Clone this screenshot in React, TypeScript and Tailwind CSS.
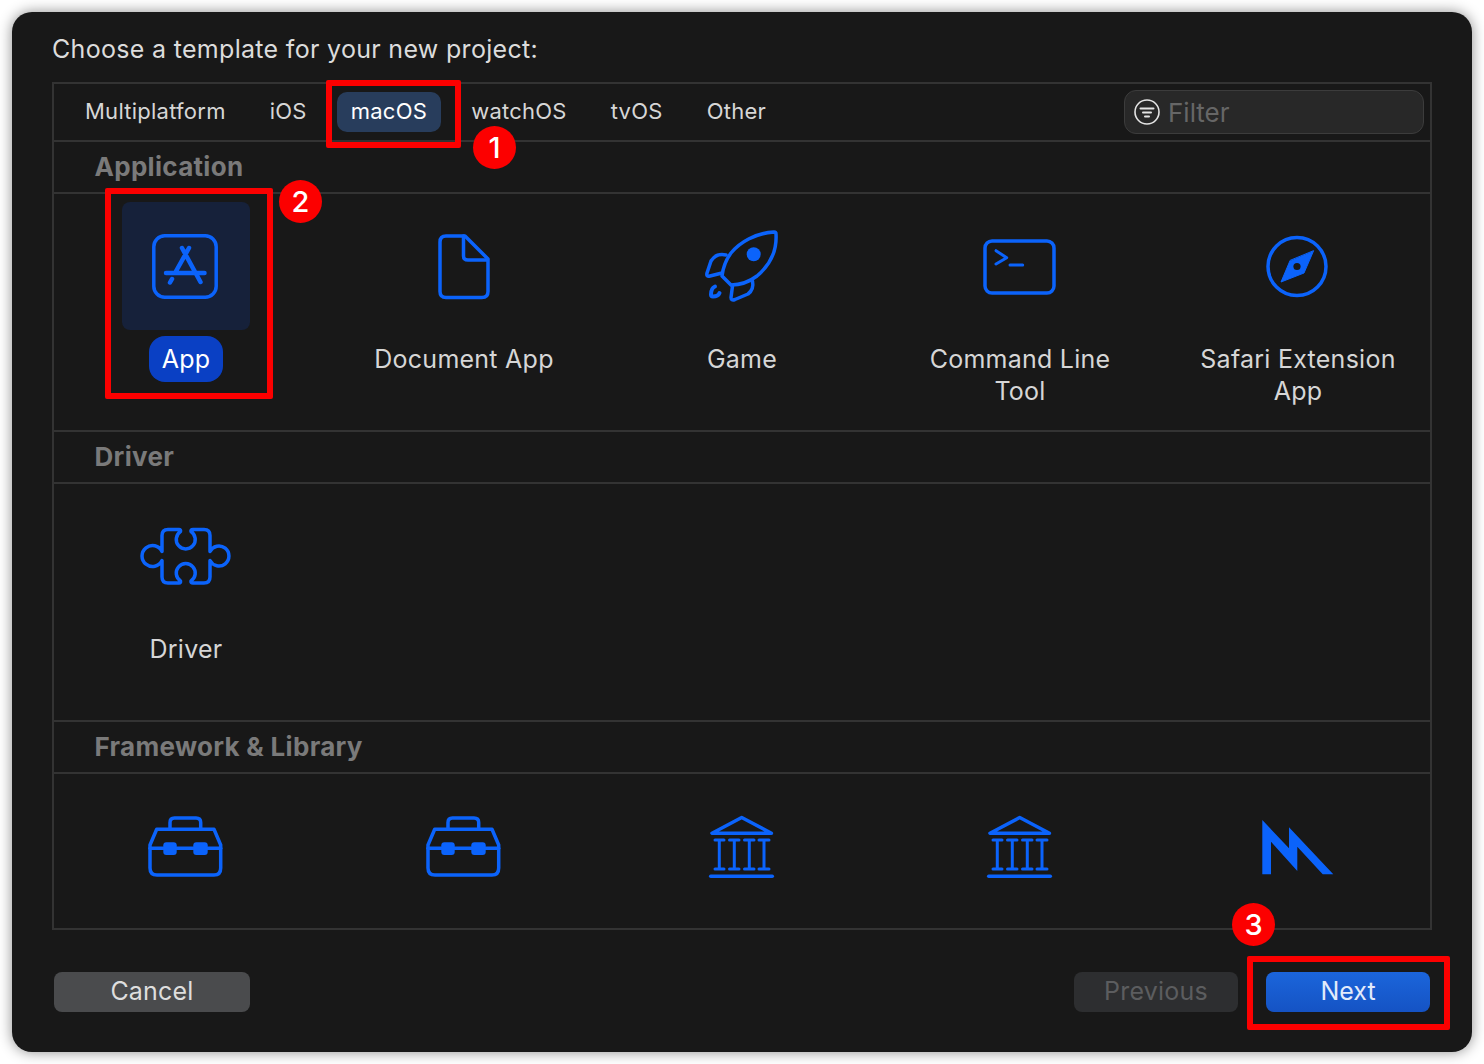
import type { ReactNode } from "react";

const BLUE = "#0b63fb";

function Glyph({ children }: { children: ReactNode }) {
  return (
    <svg
      width="96"
      height="96"
      viewBox="0 0 96 96"
      fill="none"
      stroke={BLUE}
      strokeWidth="3.5"
      strokeLinecap="round"
      strokeLinejoin="round"
    >
      {children}
    </svg>
  );
}

function AppIcon() {
  return (
    <Glyph>
      <rect x="15.8" y="17.8" width="62.4" height="61.4" rx="11" />
      <path d="M37 30 L55.5 64 M44 30 L30 55 M27 61 L25 64.5 M21 55 H59.5" strokeWidth="4.5" transform="translate(7 0)" />
    </Glyph>
  );
}

function DocIcon() {
  return (
    <Glyph>
      <path d="M49 18 H30 Q24 18 24 24 V73.5 Q24 79.5 30 79.5 H66 Q72 79.5 72 73.5 V41 Z" />
      <path d="M47.5 18 V38 Q47.5 42 52 42 H71" />
    </Glyph>
  );
}

function RocketIcon() {
  return (
    <Glyph>
      <path d="M80 14 C62 15 46 24 37 35 C31 43 29 50 28 58 L37 67 C46 67 55 64 63 58 C76 47 83 32 82 16 Q82 14 80 14 Z" />
      <circle cx="59.7" cy="36.3" r="7" fill={BLUE} stroke="none" />
      <path d="M32 37 C25 35.5 20 38 17 43 L13 55 Q12 59 16 58 L28 55" />
      <path d="M58.5 63 C59.5 68 58 73 54 76 L41 81.5 Q37 83 37 79.5 L38.5 68" />
      <path d="M21 68.5 C17.5 70 17 73 17 76.5 Q17 78.5 19 78.5 C22 78.5 24.5 77.5 25.5 75" strokeWidth="4" />
    </Glyph>
  );
}

function TerminalIcon() {
  return (
    <Glyph>
      <rect x="13" y="23" width="69" height="52" rx="7" />
      <path d="M24 32.7 L34.7 39.7 L24 46 M38 47 H50.7" strokeWidth="3" />
    </Glyph>
  );
}

function CompassIcon() {
  return (
    <Glyph>
      <circle cx="47" cy="48.5" r="29" />
      <path d="M63.5 33 L54 55 L31 64 L40 42.7 Z" fill={BLUE} stroke={BLUE} strokeWidth="1" />
      <circle cx="47" cy="48.5" r="3.6" fill="#181818" stroke="none" />
    </Glyph>
  );
}

function PuzzleIcon() {
  return (
    <Glyph>
      <path d="M41 21.5 H30 Q24 21.5 24 27.5 V43.5 A10.5 10.5 0 1 0 24 52.5 V69 Q24 75 30 75 H41 Q43 75 42.5 73 A9.5 9.5 0 1 1 53 73 Q52.5 75 55 75 H66 Q72 75 72 69 V52.5 A10 10 0 1 0 72 43.5 V27.5 Q72 21.5 66 21.5 H55 Q52.5 21.5 53 23.5 A9.5 9.5 0 1 1 42.5 23.5 Q43 21.5 41 21.5 Z" />
    </Glyph>
  );
}

function ToolboxIcon() {
  return (
    <Glyph>
      <path d="M32 31 V24.5 Q32 20 36.5 20 H58 Q62.7 20 62.7 24.5 V31" />
      <path d="M18.7 31.3 H76 L82.7 47 V70 Q82.7 77 76 77 H19 Q12 77 12 70 V47 Z" />
      <path d="M12 50.3 H82.7" />
      <rect x="25.3" y="44.3" width="13.4" height="12.7" rx="3" fill={BLUE} stroke="none" />
      <rect x="55.3" y="44.3" width="14.4" height="12.7" rx="3" fill={BLUE} stroke="none" />
    </Glyph>
  );
}

function BankIcon() {
  return (
    <Glyph>
      <path d="M47.7 19.5 L18 35.3 H77.5 Z" />
      <path d="M21 42 H30 M25.3 42 V71 M21 71 H30 M35.5 42 H45 M40.3 42 V71 M35.5 71 H45 M50.5 42 H60 M55.3 42 V71 M50.5 71 H60 M65 42 H75 M70 42 V71 M65 71 H75" strokeWidth="3" />
      <path d="M16.7 78.3 H78.3" strokeWidth="3.5" />
    </Glyph>
  );
}

function MetalIcon() {
  return (
    <Glyph>
      <path
        d="M12.3 22 L39 50.3 V29.3 L83.3 76.3 H72.7 L47.3 48.7 V73 L21 43.7 V76.3 H12.3 Z"
        fill={BLUE}
        stroke="none"
      />
    </Glyph>
  );
}

type Item = { name?: ReactNode; icon: ReactNode; selected?: boolean };

function Template({ name, icon, selected }: Item) {
  return (
    <div className="flex w-[128px] flex-col items-center">
      <div
        className={`flex h-[128px] w-[128px] items-center justify-center rounded-[8px] ${
          selected ? "bg-[#16213a]" : ""
        }`}
      >
        {icon}
      </div>
      {name && (
        <div className="mt-[6px] flex w-[260px] shrink-0 justify-center">
          <span
            className={`whitespace-nowrap rounded-[16px] px-[13px] py-[7px] text-center text-[25px] leading-[32px] tracking-[0.25px] ${
              selected ? "bg-[#0a40c4] text-white" : "text-[#d6d6d6]"
            }`}
          >
            {name}
          </span>
        </div>
      )}
    </div>
  );
}

function Section({ title, height, items }: { title: string; height: string; items: Item[] }) {
  return (
    <>
      <div className="flex h-[52px] items-center border-b-2 border-[#333333] pb-[2px] pl-[40.5px] text-[26px] font-bold tracking-[0.3px] text-[#7a7a7a]">
        {title}
      </div>
      <div className={`flex gap-[150px] px-[68px] pt-[8px] ${height}`}>
        {items.map((item, i) => (
          <Template key={i} {...item} />
        ))}
      </div>
    </>
  );
}

const tabs = ["Multiplatform", "iOS", "macOS", "watchOS", "tvOS", "Other"];

function Badge({ n, className }: { n: number; className: string }) {
  return (
    <div
      className={`absolute flex h-[43px] w-[43px] items-center justify-center rounded-full bg-[#fc0000] text-[29px] font-medium text-white ${className}`}
    >
      {n}
    </div>
  );
}

export default function App() {
  return (
    <div className="relative h-[1064px] w-[1484px] overflow-hidden bg-white p-[12px] font-['Inter',sans-serif]">
      <div className="flex h-[1040px] w-[1460px] flex-col rounded-[20px] bg-[#181818] shadow-[0_0_14px_rgba(0,0,0,0.45)]">
        <div className="flex h-[70px] items-start pl-[40px] pt-[21px] text-[25px] leading-[32px] tracking-[0.31px] text-[#dcdcdc]">
          Choose a template for your new project:
        </div>

        <div className="mx-[40px] h-[848px] border-2 border-[#333333]">
          <div className="flex h-[58px] items-center justify-between border-b-2 border-[#333333] pl-[17px] pr-[6px]">
            <div className="flex items-center gap-[16px]">
              {tabs.map((t) => (
                <div
                  key={t}
                  className={`flex h-[40px] items-center rounded-[10px] px-[14px] pb-[2px] text-[22px] tracking-[0.25px] ${
                    t === "macOS" ? "bg-[#283d5c] text-white" : "text-[#d6d6d6]"
                  }`}
                >
                  {t}
                </div>
              ))}
            </div>
            <div className="flex h-[44px] w-[300px] items-center gap-[8px] rounded-[12px] border border-[#3c3c3c] bg-[#282828] pl-[9px] text-[26px] text-[#666666]">
              <svg width="26" height="26" viewBox="0 0 26 26" fill="none" stroke="#e4e4e4" strokeLinecap="round">
                <circle cx="13" cy="13" r="12" strokeWidth="1.6" />
                <path d="M6.5 9.5 H19.5 M9 13.5 H17 M11 17.5 H15" strokeWidth="2" />
              </svg>
              Filter
            </div>
          </div>

          <div className="border-b-2 border-[#333333]">
            <Section
              title="Application"
              height="h-[236px]"
              items={[
                { name: "App", icon: <AppIcon />, selected: true },
                { name: "Document App", icon: <DocIcon /> },
                { name: "Game", icon: <RocketIcon /> },
                { name: <>Command Line<br />Tool</>, icon: <TerminalIcon /> },
                { name: <>Safari Extension<br />App</>, icon: <CompassIcon /> },
              ]}
            />
          </div>
          <div className="border-b-2 border-[#333333]">
            <Section
              title="Driver"
              height="h-[236px]"
              items={[{ name: "Driver", icon: <PuzzleIcon /> }]}
            />
          </div>
          <Section
            title="Framework & Library"
            height="h-[154px]"
            items={[
              { icon: <ToolboxIcon /> },
              { icon: <ToolboxIcon /> },
              { icon: <BankIcon /> },
              { icon: <BankIcon /> },
              { icon: <MetalIcon /> },
            ]}
          />
        </div>

        <div className="mx-[42px] mt-[42px] flex items-center justify-between">
          <div className="flex h-[40px] w-[196px] items-center justify-center rounded-[8px] bg-[#4a4b4d] text-[25px] tracking-[0.2px] text-[#dedede]">
            Cancel
          </div>
          <div className="flex gap-[28px]">
            <div className="flex h-[40px] w-[164px] items-center justify-center rounded-[8px] bg-[#2d2e30] text-[25px] tracking-[0.25px] text-[#5c5d5f]">
              Previous
            </div>
            <div className="flex h-[40px] w-[164px] items-center justify-center rounded-[8px] bg-gradient-to-b from-[#1b65db] to-[#1553c4] text-[25px] text-[#e2ebfb]">
              Next
            </div>
          </div>
        </div>
      </div>

      {/* red callouts drawn over the screenshot */}
      <div className="absolute left-[326px] top-[80px] h-[68px] w-[135px] rounded-[2px] border-[6px] border-[#fc0000]" />
      <div className="absolute left-[105px] top-[188px] h-[211px] w-[168px] rounded-[2px] border-[6px] border-[#fc0000]" />
      <div className="absolute left-[1247px] top-[956px] h-[74px] w-[203px] rounded-[2px] border-[6px] border-[#fc0000]" />
      <Badge n={1} className="left-[473px] top-[126px]" />
      <Badge n={2} className="left-[279px] top-[180px]" />
      <Badge n={3} className="left-[1232px] top-[903px]" />
    </div>
  );
}
